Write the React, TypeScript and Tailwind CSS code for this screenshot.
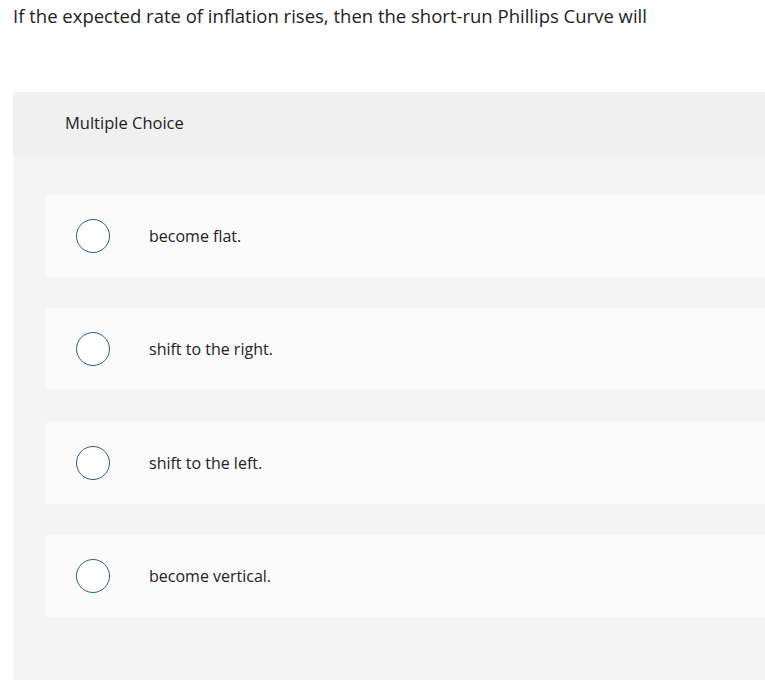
import React from "react";

const options = ["become flat.", "shift to the right.", "shift to the left.", "become vertical."];

export default function App() {
  return (
    <div className="w-[765px] h-[680px] overflow-hidden bg-white text-[#222222]" style={{ fontFamily: "'Open Sans', sans-serif" }}>
      <div className="pl-[13px] pt-[3px] text-[18.5px] leading-[26px] whitespace-nowrap">
        If the expected rate of inflation rises, then the short-run Phillips Curve will
      </div>
      <div className="ml-[13px] mt-[63px] rounded-tl-[4px] overflow-hidden">
        <div className="h-[63px] bg-[#f0f0f0] pl-[52px] flex items-center text-[16.5px]">Multiple Choice</div>
        <div className="bg-[#f4f4f4] h-[600px] pt-[40px] pl-[32px] flex flex-col gap-[31.4px]">
          {options.map((o) => (
            <div key={o} className="h-[82px] bg-[#fafafa] rounded-l-[4px] flex items-center pl-[31px]">
              <div className="w-[34px] h-[34px] rounded-full border-[1.5px] border-[#2b5d8e] bg-white shrink-0" />
              <div className="ml-[39px] text-[16px]">{o}</div>
            </div>
          ))}
        </div>
      </div>
    </div>
  );
}
